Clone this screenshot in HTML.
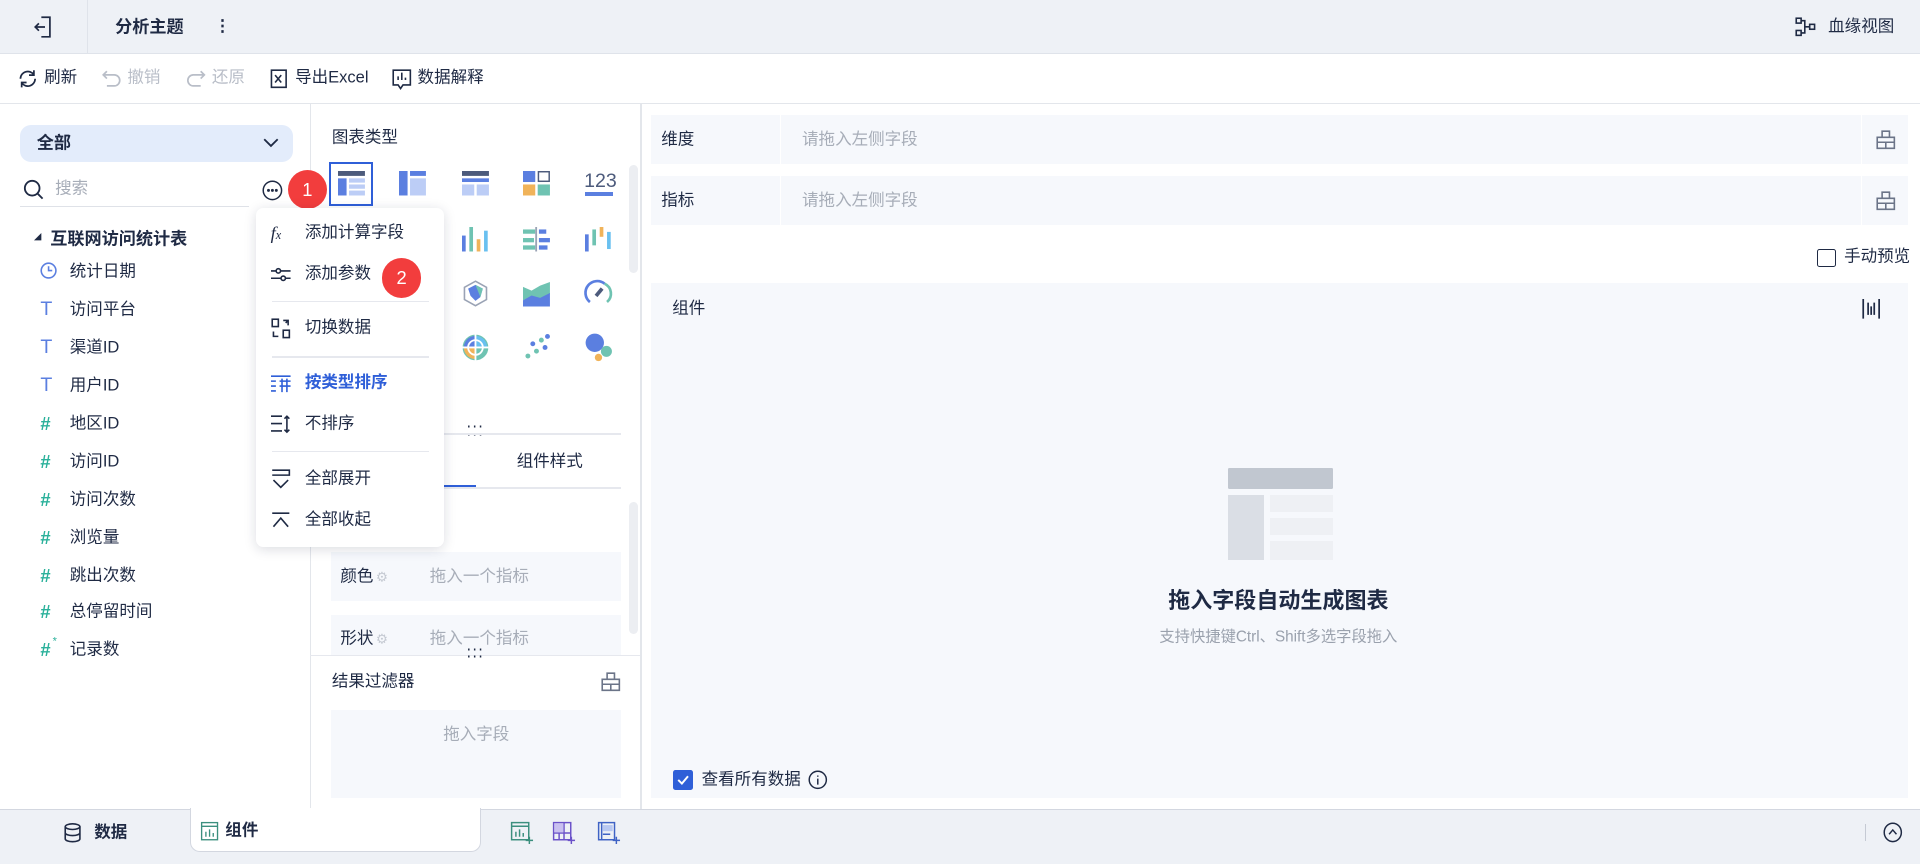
<!DOCTYPE html>
<html><head><meta charset="utf-8"><style>
*{margin:0;padding:0;box-sizing:border-box}
html,body{width:1920px;height:864px;overflow:hidden;background:#fff}
#z{zoom:1.22449;width:1568px;height:706px;position:relative;font-family:"Liberation Sans","Noto Sans CJK SC",sans-serif;font-size:13.5px;color:#1f2a44}
.a{position:absolute}
.t{position:absolute;white-space:nowrap;line-height:1;transform:translateY(-50%)}
svg{position:absolute;overflow:visible}
.g{color:#9aa1ad}
.box{position:absolute;background:#f6f8fc}
.sep{position:absolute;height:1px;background:#e6e8ee}
</style></head><body><div id="z">

<!-- top bar -->
<div class="a" style="left:0;top:0;width:1568px;height:44px;background:#eef1f6;border-bottom:1px solid #dfe3ea"></div>
<div class="a" style="left:71px;top:0;width:1px;height:44px;background:#dfe3ea"></div>
<svg style="left:28px;top:13px" width="16" height="18" viewBox="0 0 16 18" fill="none" stroke="#1f2a44" stroke-width="1.4"><path d="M6 1h7v16H6M1 9h8M4 6L1 9l3 3"/></svg>
<div class="t" style="left:94px;top:22px;font-weight:bold;font-size:14px">分析主题</div>
<div class="t" style="left:175px;top:22px;font-weight:bold">⋮</div>
<svg style="left:1466px;top:14px" width="18" height="16" viewBox="0 0 18 16" fill="none" stroke="#1f2a44" stroke-width="1.3"><rect x="1" y="1" width="4" height="4"/><rect x="1" y="11" width="4" height="4"/><rect x="12" y="6" width="4" height="4"/><path d="M5 3h3v10H5M8 8h4"/></svg>
<div class="t" style="left:1493px;top:22px">血缘视图</div>

<!-- toolbar -->
<div class="a" style="left:0;top:84px;width:1568px;height:1px;background:#e3e6eb"></div>
<svg style="left:15px;top:56px" width="16" height="16" viewBox="0 0 16 16" fill="none" stroke="#1f2a44" stroke-width="1.4"><path d="M14 8a6 6 0 0 1-11 3.3M2 8a6 6 0 0 1 11-3.3M13 1v4h-4M3 15v-4h4"/></svg>
<div class="t" style="left:36px;top:64px">刷新</div>
<svg style="left:83px;top:57px" width="16" height="14" viewBox="0 0 16 14" fill="none" stroke="#b9bec8" stroke-width="1.4"><path d="M4 1L1 4l3 3M1 4h9a4.5 4.5 0 0 1 0 9H4"/></svg>
<div class="t g" style="left:104px;top:64px;color:#b9bec8">撤销</div>
<svg style="left:152px;top:57px" width="16" height="14" viewBox="0 0 16 14" fill="none" stroke="#b9bec8" stroke-width="1.4"><path d="M12 1l3 3-3 3M15 4H6a4.5 4.5 0 0 0 0 9h6"/></svg>
<div class="t" style="left:173px;top:64px;color:#b9bec8">还原</div>
<svg style="left:220px;top:56px" width="16" height="16" viewBox="0 0 16 16" fill="none" stroke="#1f2a44" stroke-width="1.3"><path d="M2 1h12v14H2zM5 5l5 6M10 5l-5 6M2 1v14"/></svg>
<div class="t" style="left:241px;top:64px">导出Excel</div>
<svg style="left:320px;top:56px" width="16" height="17" viewBox="0 0 16 17" fill="none" stroke="#1f2a44" stroke-width="1.3"><path d="M1 1h14v12H9l-2 3-2-3H1zM5 9V6M8 9V3M11 9V7"/></svg>
<div class="t" style="left:341px;top:64px">数据解释</div>

<!-- left panel -->
<div class="a" style="left:253px;top:85px;width:1px;height:576px;background:#e3e6eb"></div>
<div class="a" style="left:16px;top:102px;width:223px;height:30px;background:#e3ecfb;border-radius:9px"></div>
<div class="t" style="left:30px;top:117px;font-weight:bold;font-size:14px">全部</div>
<svg style="left:215px;top:113px" width="13" height="8" viewBox="0 0 13 8" fill="none" stroke="#1f2a44" stroke-width="1.5"><path d="M1 1l5.5 5.5L12 1"/></svg>
<svg style="left:19px;top:146px" width="17" height="17" viewBox="0 0 17 17" fill="none" stroke="#1f2a44" stroke-width="1.5"><circle cx="7.5" cy="7.5" r="6"/><path d="M12 12l4 4"/></svg>
<div class="t" style="left:45px;top:154px;color:#a7adb8">搜索</div>
<div class="a" style="left:16px;top:168px;width:187px;height:1px;background:#dfe2e8"></div>
<svg style="left:214px;top:147px" width="17" height="17" viewBox="0 0 17 17" fill="none" stroke="#1f2a44" stroke-width="1.2"><circle cx="8.5" cy="8.5" r="7.5"/><circle cx="5.3" cy="8.5" r=".6" fill="#1f2a44"/><circle cx="8.5" cy="8.5" r=".6" fill="#1f2a44"/><circle cx="11.7" cy="8.5" r=".6" fill="#1f2a44"/></svg>
<div class="a" style="left:235px;top:139px;width:32px;height:32px;border-radius:50%;background:#f23d3d;color:#fff;font-size:15px;line-height:32px;text-align:center">1</div>

<svg style="left:28px;top:190px" width="6" height="6" viewBox="0 0 6 6"><path d="M6 0V6H0z" fill="#1f2a44"/></svg>
<div class="t" style="left:41px;top:195px;font-weight:bold;font-size:14px">互联网访问统计表</div>

<svg style="left:33px;top:214px" width="14" height="14" viewBox="0 0 14 14" fill="none" stroke="#5b7fe0" stroke-width="1.3"><circle cx="7" cy="7" r="6"/><path d="M7 3.5V7h3"/></svg>
<div class="t" style="left:57px;top:222px">统计日期</div>
<div class="t" style="left:33px;top:253px;color:#5b7fe0;font-size:16px">T</div><div class="t" style="left:57px;top:253px">访问平台</div>
<div class="t" style="left:33px;top:284px;color:#5b7fe0;font-size:16px">T</div><div class="t" style="left:57px;top:284px">渠道ID</div>
<div class="t" style="left:33px;top:315px;color:#5b7fe0;font-size:16px">T</div><div class="t" style="left:57px;top:315px">用户ID</div>
<div class="t" style="left:33px;top:346px;color:#2bb19b;font-weight:bold;font-size:15px">#</div><div class="t" style="left:57px;top:346px">地区ID</div>
<div class="t" style="left:33px;top:377px;color:#2bb19b;font-weight:bold;font-size:15px">#</div><div class="t" style="left:57px;top:377px">访问ID</div>
<div class="t" style="left:33px;top:408px;color:#2bb19b;font-weight:bold;font-size:15px">#</div><div class="t" style="left:57px;top:408px">访问次数</div>
<div class="t" style="left:33px;top:439px;color:#2bb19b;font-weight:bold;font-size:15px">#</div><div class="t" style="left:57px;top:439px">浏览量</div>
<div class="t" style="left:33px;top:470px;color:#2bb19b;font-weight:bold;font-size:15px">#</div><div class="t" style="left:57px;top:470px">跳出次数</div>
<div class="t" style="left:33px;top:500px;color:#2bb19b;font-weight:bold;font-size:15px">#</div><div class="t" style="left:57px;top:500px">总停留时间</div>
<div class="t" style="left:33px;top:531px;color:#2bb19b;font-weight:bold;font-size:15px">#</div><div class="t" style="left:43px;top:524px;color:#2bb19b;font-size:9px">*</div><div class="t" style="left:57px;top:531px">记录数</div>

<!-- middle panel -->
<div class="a" style="left:523px;top:85px;width:1px;height:576px;background:#e3e6eb"></div>
<div class="t" style="left:271px;top:113px">图表类型</div>
<div class="a" style="left:514px;top:135px;width:7px;height:88px;border-radius:4px;background:#eceef2"></div>
<div class="a" style="left:269px;top:132px;width:36px;height:36px;border:2px solid #2f5fd8"></div>
<!-- row1 -->
<svg style="left:276px;top:140px" width="22" height="20" viewBox="0 0 22 20"><rect width="22" height="4" fill="#4d5b7c"/><rect y="6" width="7" height="14" fill="#5b7fe0"/><rect x="9" y="6" width="13" height="3.5" fill="#bccdf6"/><rect x="9" y="11" width="13" height="3.5" fill="#bccdf6"/><rect x="9" y="16" width="13" height="4" fill="#bccdf6"/></svg>
<svg style="left:326px;top:140px" width="22" height="20" viewBox="0 0 22 20"><rect width="7" height="20" fill="#5b7fe0"/><rect x="9" width="13" height="4" fill="#5b7fe0"/><rect x="9" y="6" width="13" height="14" fill="#bccdf6"/></svg>
<svg style="left:377px;top:140px" width="22" height="20" viewBox="0 0 22 20"><rect width="22" height="4" fill="#4d5b7c"/><rect y="6" width="22" height="3" fill="#5b7fe0"/><rect y="11" width="10" height="9" fill="#bccdf6"/><rect x="12" y="11" width="10" height="9" fill="#bccdf6"/></svg>
<svg style="left:427px;top:140px" width="22" height="20" viewBox="0 0 22 20"><rect width="10" height="9" fill="#5b7fe0"/><rect x="12.6" y=".6" width="8.8" height="7.8" fill="none" stroke="#4d5b7c" stroke-width="1.2"/><rect y="11" width="10" height="9" fill="#f0b35a"/><rect x="12" y="11" width="10" height="9" fill="#6fc3b2"/></svg>
<div class="t" style="left:477px;top:149px;font-size:16px;color:#4d5b7c">123</div>
<div class="a" style="left:478px;top:157px;width:23px;height:3px;background:#5b7fe0"></div>
<!-- row2 -->
<svg style="left:377px;top:185px" width="22" height="20" viewBox="0 0 22 20"><rect y="7" width="3" height="13" fill="#5b7fe0"/><rect x="6" width="3" height="20" fill="#6fc3b2"/><rect x="12" y="10" width="3" height="10" fill="#f0b35a"/><rect x="18" y="3" width="3" height="17" fill="#69c0f0"/></svg>
<svg style="left:427px;top:185px" width="22" height="20" viewBox="0 0 22 20"><rect y="2" width="10" height="3.5" fill="#6fc3b2"/><rect y="9" width="9" height="3.5" fill="#6fc3b2"/><rect y="15" width="10" height="3.5" fill="#6fc3b2"/><rect x="10" width="1.5" height="20" fill="#9aa3b5"/><rect x="13" y="2" width="6" height="3.5" fill="#5b7fe0"/><rect x="13" y="9" width="9" height="3.5" fill="#5b7fe0"/><rect x="13" y="15" width="7" height="3.5" fill="#5b7fe0"/></svg>
<svg style="left:478px;top:185px" width="22" height="20" viewBox="0 0 22 20"><rect y="6" width="3" height="14" fill="#5b7fe0"/><rect x="6" y="2" width="3" height="13" fill="#6fc3b2"/><rect x="12" width="3" height="8" fill="#f0b35a"/><rect x="18" y="4" width="3" height="14" fill="#69c0f0"/></svg>
<!-- row3 -->
<svg style="left:377px;top:229px" width="22" height="22" viewBox="0 0 22 22"><path d="M11 1l9 5v10l-9 5-9-5V6z" fill="none" stroke="#9aa3b5" stroke-width="1.3"/><path d="M5 7l6-3 6 3-2 7-4 3-4-4z" fill="#5b7fe0"/><path d="M11 4l6 3-2 7z" fill="#6fc3b2"/></svg>
<svg style="left:427px;top:230px" width="22" height="20" viewBox="0 0 22 20"><path d="M0 4l7 3 7-4 8-3v10l-8 4-7-2-7 3z" fill="#6fc3b2"/><path d="M0 15l7-4 7 2 8-4v11H0z" fill="#5b7fe0"/></svg>
<svg style="left:478px;top:229px" width="22" height="20" viewBox="0 0 22 20" fill="none" stroke-width="2.2"><path d="M4 18A9 9 0 0 1 16 3" stroke="#5b7fe0"/><path d="M16 3a9 9 0 0 1 2 15" stroke="#6fc3b2"/><path d="M9 13l5-6" stroke="#4d5b7c" stroke-width="3"/></svg>
<!-- row4 -->
<svg style="left:377px;top:273px" width="22" height="22" viewBox="0 0 22 22"><circle cx="11" cy="11" r="9.5" fill="none" stroke="#6fc3b2" stroke-width="2"/><path d="M11 11V1.5A9.5 9.5 0 0 0 1.5 11z" fill="#5b7fe0"/><path d="M11 11V1.5A9.5 9.5 0 0 1 20.5 11z" fill="#69c0f0"/><path d="M11 11H1.5A9.5 9.5 0 0 0 11 20.5z" fill="#f0b35a"/><path d="M11 11h9.5A9.5 9.5 0 0 1 11 20.5z" fill="#6fc3b2"/><circle cx="11" cy="11" r="6" fill="none" stroke="#fff" stroke-width="1.5"/><path d="M11 0v22M0 11h22" stroke="#fff" stroke-width="1.5"/></svg>
<svg style="left:427px;top:273px" width="22" height="22" viewBox="0 0 22 22"><circle cx="20" cy="2" r="2" fill="#5b7fe0"/><circle cx="15" cy="5" r="2" fill="#6fc3b2"/><circle cx="8" cy="8" r="2" fill="#5b7fe0"/><circle cx="18" cy="11" r="2" fill="#5b7fe0"/><circle cx="11" cy="14" r="2" fill="#6fc3b2"/><circle cx="4" cy="18" r="2" fill="#6fc3b2"/></svg>
<svg style="left:478px;top:272px" width="22" height="24" viewBox="0 0 22 24"><circle cx="8" cy="8" r="7.5" fill="#5b7fe0"/><circle cx="17.5" cy="15" r="4.5" fill="#6fc3b2"/><circle cx="11" cy="20" r="3" fill="#f0b35a"/></svg>

<div class="t" style="left:381px;top:353px;font-size:12px;letter-spacing:1px;line-height:.5">⋅⋅⋅<br>⋅⋅⋅</div>
<div class="sep" style="left:270px;top:354px;width:237px"></div>
<div class="t" style="left:422px;top:377px">组件样式</div>
<div class="sep" style="left:270px;top:398px;width:237px"></div>
<div class="a" style="left:253px;top:396px;width:136px;height:2px;background:#2f5fd8"></div>
<div class="a" style="left:514px;top:410px;width:7px;height:108px;border-radius:4px;background:#eceef2"></div>
<div class="box" style="left:270px;top:451px;width:237px;height:40px"></div>
<div class="t" style="left:278px;top:471px">颜色</div>
<div class="t" style="left:307px;top:471px;color:#c4c9d2;font-size:11px">⚙</div>
<div class="t" style="left:351px;top:471px;color:#a7adb8">拖入一个指标</div>
<div class="box" style="left:270px;top:502px;width:237px;height:33px"></div>
<div class="t" style="left:278px;top:522px">形状</div>
<div class="t" style="left:307px;top:522px;color:#c4c9d2;font-size:11px">⚙</div>
<div class="t" style="left:351px;top:522px;color:#a7adb8">拖入一个指标</div>
<div class="sep" style="left:253px;top:535px;width:270px"></div>
<div class="t" style="left:381px;top:535px;font-size:12px;letter-spacing:1px;line-height:.5">⋅⋅⋅<br>⋅⋅⋅</div>
<div class="t" style="left:271px;top:557px">结果过滤器</div>
<svg style="left:491px;top:549px" width="16" height="16" viewBox="0 0 16 16" fill="none" stroke="#6b7488" stroke-width="1.3"><path d="M1 6h14v9H1zM5 6V1h6v5M1 10h14M8 10v5"/></svg>
<div class="box" style="left:270px;top:580px;width:237px;height:72px"></div>
<div class="t" style="left:362px;top:600px;color:#a7adb8">拖入字段</div>

<!-- right -->
<div class="box" style="left:532px;top:94px;width:1026px;height:40px"></div>
<div class="a" style="left:637px;top:94px;width:1px;height:40px;background:#fff"></div>
<div class="a" style="left:1520px;top:94px;width:1px;height:40px;background:#fff"></div>
<div class="t" style="left:540px;top:114px">维度</div>
<div class="t" style="left:655px;top:114px;color:#a7adb8">请拖入左侧字段</div>
<svg style="left:1532px;top:106px" width="16" height="16" viewBox="0 0 16 16" fill="none" stroke="#6b7488" stroke-width="1.3"><path d="M1 6h14v9H1zM5 6V1h6v5M1 10h14M8 10v5"/></svg>
<div class="box" style="left:532px;top:144px;width:1026px;height:40px"></div>
<div class="a" style="left:637px;top:144px;width:1px;height:40px;background:#fff"></div>
<div class="a" style="left:1520px;top:144px;width:1px;height:40px;background:#fff"></div>
<div class="t" style="left:540px;top:164px">指标</div>
<div class="t" style="left:655px;top:164px;color:#a7adb8">请拖入左侧字段</div>
<svg style="left:1532px;top:156px" width="16" height="16" viewBox="0 0 16 16" fill="none" stroke="#6b7488" stroke-width="1.3"><path d="M1 6h14v9H1zM5 6V1h6v5M1 10h14M8 10v5"/></svg>
<div class="a" style="left:1484px;top:203px;width:15px;height:15px;border:1.3px solid #1f2a44;border-radius:2px"></div>
<div class="t" style="left:1506px;top:210px">手动预览</div>

<div class="box" style="left:532px;top:231px;width:1026px;height:421px"></div>
<div class="t" style="left:549px;top:252px">组件</div>
<svg style="left:1521px;top:244px" width="15" height="16" viewBox="0 0 15 16" fill="none" stroke="#1f2a44" stroke-width="1.4"><path d="M1 0v16M14 0v16M5 3v10M7.5 6v7M10 3v10"/></svg>
<div class="a" style="left:1003px;top:382px;width:86px;height:17px;background:#c1c7d0;border-radius:1px"></div>
<div class="a" style="left:1003px;top:404px;width:29px;height:53px;background:#dadee5"></div>
<div class="a" style="left:1037px;top:404px;width:52px;height:14px;background:#eef0f4"></div>
<div class="a" style="left:1037px;top:423px;width:52px;height:14px;background:#eef0f4"></div>
<div class="a" style="left:1037px;top:442px;width:52px;height:15px;background:#eef0f4"></div>
<div class="t" style="left:1044px;top:491px;transform:translate(-50%,-50%);font-weight:bold;font-size:18px">拖入字段自动生成图表</div>
<div class="t" style="left:1044px;top:520px;transform:translate(-50%,-50%);color:#9aa1ad;font-size:12.5px">支持快捷键Ctrl、Shift多选字段拖入</div>
<div class="a" style="left:550px;top:629px;width:16px;height:16px;background:#2f5fd8;border-radius:2px"></div>
<svg style="left:553px;top:633px" width="10" height="8" viewBox="0 0 10 8" fill="none" stroke="#fff" stroke-width="1.6"><path d="M1 4l3 3 5-6"/></svg>
<div class="t" style="left:573px;top:637px">查看所有数据</div>
<svg style="left:660px;top:629px" width="16" height="16" viewBox="0 0 16 16" fill="none" stroke="#1f2a44" stroke-width="1.2"><circle cx="8" cy="8" r="7"/><path d="M8 7v5M8 4.5v1"/></svg>

<!-- menu -->
<div class="a" style="left:209px;top:170px;width:154px;height:277px;background:#fff;border-radius:6px;box-shadow:0 2px 10px rgba(20,30,60,.15)"></div>
<div class="t" style="left:221px;top:190px;font-style:italic;font-family:'Liberation Serif',serif;font-size:15px">f<span style="font-size:10px">x</span></div>
<div class="t" style="left:249px;top:190px">添加计算字段</div>
<svg style="left:221px;top:217px" width="16" height="14" viewBox="0 0 16 14" fill="none" stroke="#1f2a44" stroke-width="1.3"><path d="M0 4h16M0 10h16"/><circle cx="6" cy="4" r="1.8" fill="#fff"/><circle cx="10" cy="10" r="1.8" fill="#fff"/></svg>
<div class="t" style="left:249px;top:224px">添加参数</div>
<div class="a" style="left:312px;top:211px;width:32px;height:32px;border-radius:50%;background:#f23d3d;color:#fff;font-size:15px;line-height:32px;text-align:center">2</div>
<div class="sep" style="left:222px;top:246px;width:128px"></div>
<svg style="left:221px;top:260px" width="16" height="17" viewBox="0 0 16 17" fill="none" stroke="#1f2a44" stroke-width="1.3"><rect x="1" y="1" width="5" height="6"/><rect x="10" y="10" width="5" height="6"/><path d="M10 2h4v4M14 2l-2 2M6 15H2v-4"/></svg>
<div class="t" style="left:249px;top:268px">切换数据</div>
<div class="sep" style="left:222px;top:291px;width:128px"></div>
<svg style="left:221px;top:306px" width="16" height="14" viewBox="0 0 16 14" fill="none" stroke="#2f5fd8" stroke-width="1.3"><path d="M0 1h16M0 5h4M0 9h4M0 13h4M7 5h9M7 9h9M9 3v11M13 3v11"/></svg>
<div class="t" style="left:249px;top:313px;color:#2f5fd8;font-weight:bold">按类型排序</div>
<svg style="left:221px;top:339px" width="16" height="15" viewBox="0 0 16 15" fill="none" stroke="#1f2a44" stroke-width="1.3"><path d="M0 1h9M0 7h9M0 13h9M13 1v13M11 3l2-2 2 2M11 12l2 2 2-2"/></svg>
<div class="t" style="left:249px;top:346px">不排序</div>
<div class="sep" style="left:222px;top:368px;width:128px"></div>
<svg style="left:221px;top:383px" width="16" height="16" viewBox="0 0 16 16" fill="none" stroke="#1f2a44" stroke-width="1.3"><path d="M1 1h14v4H1M2 9l6 6 6-6"/></svg>
<div class="t" style="left:249px;top:391px">全部展开</div>
<svg style="left:221px;top:418px" width="16" height="13" viewBox="0 0 16 13" fill="none" stroke="#1f2a44" stroke-width="1.3"><path d="M1 1h14M2 12l6-7 6 7"/></svg>
<div class="t" style="left:249px;top:425px">全部收起</div>

<!-- bottom bar -->
<div class="a" style="left:0;top:661px;width:1568px;height:45px;background:#eef1f6;border-top:1px solid #d3d7e0"></div>
<svg style="left:52px;top:672px" width="14" height="16" viewBox="0 0 14 16" fill="none" stroke="#1f2a44" stroke-width="1.3"><ellipse cx="7" cy="3" rx="6" ry="2.3"/><path d="M1 3v10c0 1.3 2.7 2.3 6 2.3s6-1 6-2.3V3M1 8c0 1.3 2.7 2.3 6 2.3s6-1 6-2.3"/></svg>
<div class="t" style="left:77px;top:680px;font-weight:bold">数据</div>
<div class="a" style="left:155px;top:660px;width:238px;height:36px;background:#fff;border:1px solid #d3d7e0;border-top:none;border-radius:0 0 8px 8px"></div>
<svg style="left:164px;top:671px" width="14" height="15" viewBox="0 0 14 15" fill="none" stroke="#3b8f7e" stroke-width="1.1"><rect x=".5" y=".5" width="13" height="14"/><path d="M.5 3.5h13M4 12V8M7 12V6M10 12V9"/></svg>
<div class="t" style="left:184px;top:679px;font-weight:bold">组件</div>
<svg style="left:417px;top:671px" width="18" height="18" viewBox="0 0 18 18" fill="none" stroke="#3b8f7e" stroke-width="1.2"><rect x=".5" y=".5" width="14" height="14"/><path d="M.5 3.5h14M4 12V8M7 12V6M10 12V9M15 12v6M12 15h6"/></svg>
<svg style="left:452px;top:671px" width="18" height="18" viewBox="0 0 18 18" fill="none" stroke="#6b52c9" stroke-width="1.2"><rect x=".5" y=".5" width="14" height="14"/><path d="M.5 9h14M9 .5v14M5 9v5.5M15 12v6M12 15h6"/><rect x="1" y="1" width="7.5" height="7.5" fill="#c9c0f0" stroke="none"/></svg>
<svg style="left:488px;top:671px" width="18" height="18" viewBox="0 0 18 18" fill="none" stroke="#3f63c5" stroke-width="1.2"><rect x=".5" y=".5" width="13" height="14"/><rect x="4" y="2.5" width="8" height="5" fill="#b8c8f2" stroke="none"/><path d="M3 .5v14M4 10h6M15 12v6M12 15h6"/></svg>
<div class="a" style="left:1523px;top:673px;width:1px;height:14px;background:#c5cad4"></div>
<svg style="left:1538px;top:671px" width="16" height="17" viewBox="0 0 16 17" fill="none" stroke="#1f2a44" stroke-width="1.2"><ellipse cx="8" cy="8.5" rx="7" ry="7.5"/><path d="M5 10l3-3.5 3 3.5"/></svg>

</div></body></html>
